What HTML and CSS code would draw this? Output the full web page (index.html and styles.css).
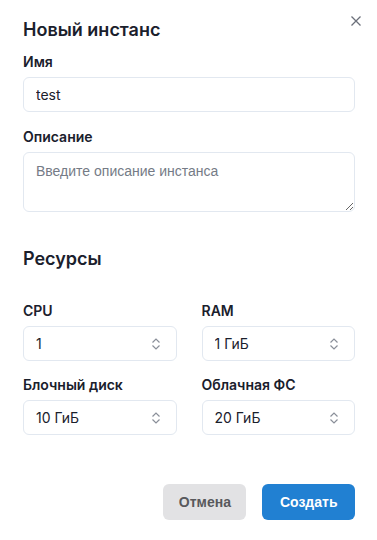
FILE: index.html
```html
<!DOCTYPE html>
<html lang="ru">
<head>
    <meta charset="utf-8" />
    <meta name="viewport" content="width=device-width, initial-scale=1.0" />
    <link rel="stylesheet" href="styles.css">
    <title>Новый инстанс</title>
</head>
<body>
    <div class="modal">
        <div class="modal-header">
            <h2 class="modal-title">Новый инстанс</h2>
            <button class="close-btn" aria-label="Закрыть">
                <svg width="10" height="10" viewBox="0 0 10 10">
                    <path d="M0.5 0.5 L9.5 9.5 M9.5 0.5 L0.5 9.5" stroke="#6b6f7a" stroke-width="1.3" fill="none" />
                </svg>
            </button>
        </div>

        <div class="field">
            <label for="name" class="label">Имя</label>
            <input type="text" id="name" class="input" value="test">
        </div>

        <div class="field">
            <label for="desc" class="label">Описание</label>
            <textarea id="desc" class="input textarea" placeholder="Введите описание инстанса"></textarea>
        </div>

        <h2 class="section-title">Ресурсы</h2>

        <div class="resources">
            <div class="field">
                <label for="cpu" class="label">CPU</label>
                <div class="select-wrap">
                    <select id="cpu" class="input select">
                        <option>1</option>
                        <option>2</option>
                        <option>4</option>
                    </select>
                    <svg class="chevron" width="10" height="12" viewBox="0 0 10 12">
                        <path d="M1.5 4.5 L5 1 L8.5 4.5 M1.5 7.5 L5 11 L8.5 7.5" stroke="#8a8f99" stroke-width="1.2" fill="none" />
                    </svg>
                </div>
            </div>
            <div class="field">
                <label for="ram" class="label">RAM</label>
                <div class="select-wrap">
                    <select id="ram" class="input select">
                        <option>1 ГиБ</option>
                        <option>2 ГиБ</option>
                    </select>
                    <svg class="chevron" width="10" height="12" viewBox="0 0 10 12">
                        <path d="M1.5 4.5 L5 1 L8.5 4.5 M1.5 7.5 L5 11 L8.5 7.5" stroke="#8a8f99" stroke-width="1.2" fill="none" />
                    </svg>
                </div>
            </div>
            <div class="field">
                <label for="disk" class="label">Блочный диск</label>
                <div class="select-wrap">
                    <select id="disk" class="input select">
                        <option>10 ГиБ</option>
                        <option>20 ГиБ</option>
                    </select>
                    <svg class="chevron" width="10" height="12" viewBox="0 0 10 12">
                        <path d="M1.5 4.5 L5 1 L8.5 4.5 M1.5 7.5 L5 11 L8.5 7.5" stroke="#8a8f99" stroke-width="1.2" fill="none" />
                    </svg>
                </div>
            </div>
            <div class="field">
                <label for="fs" class="label">Облачная ФС</label>
                <div class="select-wrap">
                    <select id="fs" class="input select">
                        <option>20 ГиБ</option>
                        <option>40 ГиБ</option>
                    </select>
                    <svg class="chevron" width="10" height="12" viewBox="0 0 10 12">
                        <path d="M1.5 4.5 L5 1 L8.5 4.5 M1.5 7.5 L5 11 L8.5 7.5" stroke="#8a8f99" stroke-width="1.2" fill="none" />
                    </svg>
                </div>
            </div>
        </div>

        <div class="modal-footer">
            <button class="btn btn-cancel">Отмена</button>
            <button class="btn btn-primary">Создать</button>
        </div>
    </div>
</body>
</html>
```

FILE: styles.css
```css
body {
    margin: 0;
    background-color: #ffffff;
    font-family: Inter, 'Noto Sans', sans-serif;
    color: #1a202c;
}

.modal {
    padding: 16px 22px 0 23px;
    display: flex;
    flex-direction: column;
}

.modal-header {
    display: flex;
    justify-content: space-between;
    align-items: flex-start;
    margin-bottom: 8px;
}

.modal-title,
.section-title {
    margin: 0;
    font-size: 18px;
    line-height: 28px;
    font-weight: 600;
    color: #1a202c;
}

.section-title {
    margin-top: 33px;
    margin-bottom: 28px;
}

.close-btn {
    background: none;
    border: none;
    padding: 0;
    margin-right: -6px;
    width: 10px;
    height: 10px;
    cursor: pointer;
    display: flex;
}

.field {
    display: flex;
    flex-direction: column;
    gap: 5px;
}

.field + .field {
    margin-top: 15px;
}

.label {
    font-size: 14px;
    line-height: 20px;
    font-weight: 600;
    color: #1a202c;
}

.input {
    box-sizing: border-box;
    width: 100%;
    height: 35px;
    border: 1px solid #e2e8f0;
    border-radius: 6px;
    padding: 0 12px;
    font-family: Inter, 'Noto Sans', sans-serif;
    font-size: 14px;
    color: #1a202c;
    background-color: #ffffff;
    outline: none;
}

.textarea {
    height: 60px;
    padding: 8px 12px;
    line-height: 20px;
    resize: vertical;
    font-family: 'Liberation Sans', Arial, sans-serif;
}

.textarea::placeholder {
    color: #757b86;
}

.resources {
    display: grid;
    grid-template-columns: 1fr 1fr;
    column-gap: 25px;
    row-gap: 14px;
}

.resources .field + .field {
    margin-top: 0;
}

.select-wrap {
    position: relative;
}

.select {
    appearance: none;
    -webkit-appearance: none;
    padding-right: 36px;
}

.chevron {
    position: absolute;
    right: 16px;
    top: 12px;
    pointer-events: none;
}

.modal-footer {
    display: flex;
    justify-content: flex-end;
    gap: 16px;
    margin-top: 49px;
}

.btn {
    height: 36px;
    padding: 0 15.5px;
    border: none;
    border-radius: 6px;
    font-family: 'Liberation Sans', Arial, sans-serif;
    font-size: 14px;
    font-weight: 700;
    cursor: pointer;
}

.btn-cancel {
    background-color: #e2e2e4;
    color: #58595c;
}

.btn-primary {
    background-color: #2180d2;
    color: #ffffff;
    padding: 0 17.5px;
}
```
